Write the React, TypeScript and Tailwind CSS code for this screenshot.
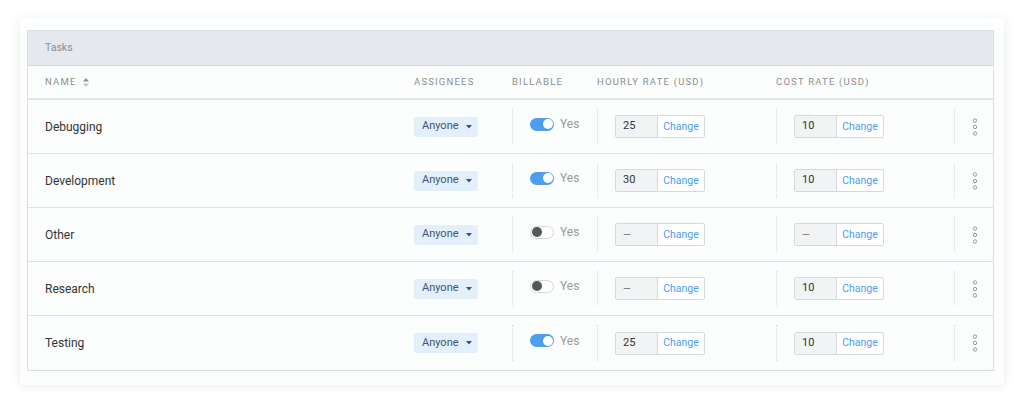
import React from "react";

type Row = { name: string; billable: boolean; hourly: string; cost: string };

const rows: Row[] = [
  { name: "Debugging", billable: true, hourly: "25", cost: "10" },
  { name: "Development", billable: true, hourly: "30", cost: "10" },
  { name: "Other", billable: false, hourly: "—", cost: "—" },
  { name: "Research", billable: false, hourly: "—", cost: "10" },
  { name: "Testing", billable: true, hourly: "25", cost: "10" },
];

const cols = "grid grid-cols-[386px_98px_85px_179px_178px_1fr]";

function Toggle({ on }: { on: boolean }) {
  return on ? (
    <div className="w-[24px] h-[13px] rounded-full bg-[#4b9ef0] flex items-center justify-end pr-[1.5px]">
      <div className="w-[10px] h-[10px] rounded-full bg-white" />
    </div>
  ) : (
    <div className="w-[24px] h-[13px] rounded-full bg-white border border-[#d4d7db] flex items-center pl-[1px]">
      <div className="w-[10px] h-[10px] rounded-full bg-[#555759]" />
    </div>
  );
}

function RateInput({ value }: { value: string }) {
  const dash = value === "—";
  return (
    <div className="flex h-[23px] w-[90px] border border-[#d6dade] rounded-[2px] bg-white">
      <div
        className={`w-[42px] bg-[#f1f3f5] border-r border-[#d6dade] flex items-center pl-[7px] ${
          dash ? "text-[10px] text-[#777]" : "text-[11px] text-[#333]"
        }`}
      >
        {dash ? "—" : value}
      </div>
      <div className="flex-1 flex items-center justify-center text-[10.5px] text-[#4a9df0]">Change</div>
    </div>
  );
}

function Dots() {
  return (
    <svg width="6" height="18" viewBox="0 0 6 18">
      <circle cx="3" cy="2.5" r="1.7" fill="none" stroke="#9a9a9a" strokeWidth="1" />
      <circle cx="3" cy="9" r="1.7" fill="none" stroke="#9a9a9a" strokeWidth="1" />
      <circle cx="3" cy="15.5" r="1.7" fill="none" stroke="#9a9a9a" strokeWidth="1" />
    </svg>
  );
}

export default function App() {
  return (
    <div
      className="w-[1024px] h-[405px] bg-white pt-[17px] pl-[20px]"
      style={{ fontFamily: "Roboto, 'Liberation Sans', sans-serif" }}
    >
      <div className="w-[984px] bg-[#fcfdfd] pl-[7px] pr-[10px] pt-[13px] pb-[14px] shadow-[0_1px_10px_rgba(0,0,0,0.08)]">
        <div className="border border-[#dadee4] bg-[#fcfdfd]">
          <div className="h-[35px] bg-[#e5e8ec] border-b border-[#d3d8de] flex items-center pl-[17px] text-[10.5px] text-[#8b8f94]">
            Tasks
          </div>
          <div className={`${cols} h-[34px] border-b-2 border-[#e3e6ea] items-center text-[9.5px] tracking-[1.2px] text-[#8e8e8e]`}>
            <div className="pl-[17px] flex items-center gap-[6px]">
              NAME
              <svg width="6" height="9" viewBox="0 0 6 9">
                <path d="M3 0 L6 3.5 L0 3.5 Z" fill="#8e8e8e" />
                <path d="M3 9 L6 5.5 L0 5.5 Z" fill="#c4c4c4" />
              </svg>
            </div>
            <div>ASSIGNEES</div>
            <div>BILLABLE</div>
            <div>HOURLY RATE (USD)</div>
            <div>COST RATE (USD)</div>
            <div />
          </div>
          {rows.map((r, i) => (
            <div
              key={r.name}
              className={`${cols} h-[54px] ${i < rows.length - 1 ? "border-b border-[#dfe2e7]" : ""}`}
            >
              <div className="pl-[17px] flex items-center text-[12px] text-[#333]">{r.name}</div>
              <div className="flex items-center">
                <div className="h-[20px] w-[64px] bg-[#e3f0fc] rounded-[2px] flex items-center pl-[8px] gap-[7px] text-[11px] text-[#3c5570]">
                  Anyone
                  <svg width="6" height="4" viewBox="0 0 6 4">
                    <path d="M0 0 L6 0 L3 3.5 Z" fill="#3c5570" />
                  </svg>
                </div>
              </div>
              <div className="my-[9px] border-l border-dotted border-[#d5d8dc] pl-[17px] flex items-center gap-[6px] pb-[5px]">
                <Toggle on={r.billable} />
                <span className="text-[12px] text-[#9a9a9a]">Yes</span>
              </div>
              <div className="my-[9px] border-l border-dotted border-[#d5d8dc] pl-[17px] flex items-center">
                <RateInput value={r.hourly} />
              </div>
              <div className="my-[9px] border-l border-dotted border-[#d5d8dc] pl-[17px] flex items-center">
                <RateInput value={r.cost} />
              </div>
              <div className="my-[9px] border-l border-dotted border-[#d5d8dc] pl-[17px] flex items-center">
                <Dots />
              </div>
            </div>
          ))}
        </div>
      </div>
    </div>
  );
}
